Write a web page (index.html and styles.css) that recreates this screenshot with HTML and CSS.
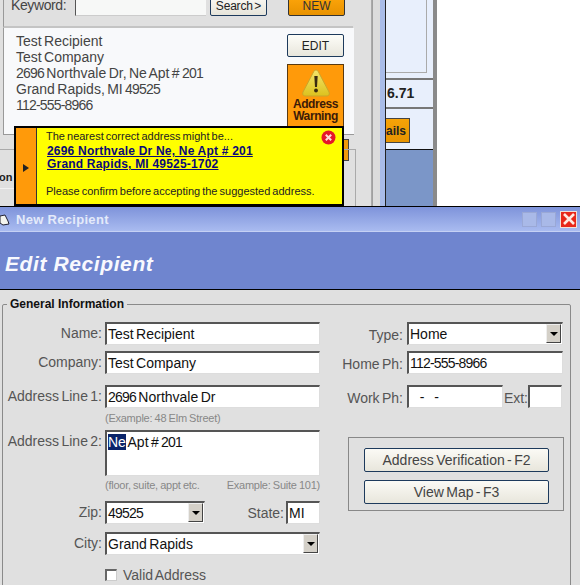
FILE: index.html
```html
<!DOCTYPE html>
<html lang="en">
<head>
    <meta charset="UTF-8" />
    <meta name="viewport" content="width=device-width, initial-scale=1.0" />
    <title>New Recipient</title>
    <link rel="stylesheet" href="styles.css">
</head>
<body>
    <!-- window behind the dialog -->
    <div class="back-window">
        <div class="toolbar">
            <span class="keyword-label">Keyword:</span>
            <span class="keyword-input"></span>
            <button class="btn-small" type="button">Search &gt;</button>
            <button class="btn-new" type="button">NEW</button>
        </div>
        <div class="recipient-card">
            <div class="recipient-text">
                <div>Test Recipient</div>
                <div>Test Company</div>
                <div><span class="num">2696</span> Northvale Dr, Ne Apt # <span class="num">201</span></div>
                <div>Grand Rapids, MI <span class="num">49525</span></div>
                <div class="num">112-555-8966</div>
            </div>
            <div class="recipient-actions">
                <button class="btn-edit" type="button">EDIT</button>
                <div class="warning-box">
                    <svg class="warning-icon" width="30" height="30" viewBox="0 0 30 30">
                        <defs>
                            <linearGradient id="warnFill" x1="0" y1="0" x2="0" y2="1">
                                <stop offset="0" stop-color="#f4e46a" />
                                <stop offset="1" stop-color="#dcc21e" />
                            </linearGradient>
                        </defs>
                        <path d="M15 2 C16.5 2 17 3 18 5 L28 24 C29 27 27.5 28 25 28 L5 28 C2.500 28 1 27 2 24 L12 5 C13 3 13.500 2 15 2 Z" fill="url(#warnFill)" stroke="#c9a52a" />
                        <path d="M13.300 8 H16.700 L16 19 H14 Z" fill="#3a2a10" />
                        <circle cx="15" cy="22.500" r="1.900" fill="#3a2a10" />
                    </svg>
                    <div class="warning-label">Address<br>Warning</div>
                </div>
            </div>
        </div>
        <div class="lower-strip">
            <span class="cut-tab"><span class="cut-label">on</span></span>
            <span class="orange-tab"></span>
            <span class="side-frame"></span>
        </div>
    </div>

    <div class="side-panel">
        <div class="side-column">
            <div class="side-top"><span class="side-inner"></span></div>
            <div class="side-amount">6.71</div>
            <div class="side-action"><button class="btn-details" type="button">ails</button></div>
            <div class="side-fill"></div>
        </div>
    </div>

    <!-- address tooltip -->
    <div class="tooltip">
        <div class="tooltip-strip"><span class="tooltip-arrow"></span></div>
        <div class="tooltip-body">
            <p class="tooltip-line">The nearest correct address might be...</p>
            <a class="tooltip-link" href="#">2696 Northvale Dr Ne, Ne Apt # 201<br>Grand Rapids, MI 49525-1702</a>
            <p class="tooltip-line tooltip-confirm">Please confirm before accepting the suggested address.</p>
        </div>
        <svg class="tooltip-close" width="15" height="15" viewBox="0 0 15 15">
            <circle cx="7.500" cy="7.500" r="7" fill="#e5182a" />
            <path d="M4.800 4.800 L10.200 10.200 M10.200 4.800 L4.800 10.200" stroke="#ffd9d9" stroke-width="2" />
        </svg>
    </div>

    <!-- dialog -->
    <div class="dialog">
        <div class="titlebar">
            <svg class="title-icon" width="10" height="14" viewBox="0 0 10 14">
                <path d="M0 4 L5 3 L8 9 L9 12 L3 13 L0 11 Z" fill="#f4f4ee" stroke="#223" stroke-width="1" />
            </svg>
            <span class="title-text">New Recipient</span>
            <span class="title-btn"></span>
            <span class="title-btn"></span>
            <span class="title-close">
                <svg width="14" height="14" viewBox="0 0 14 14">
                    <path d="M2 2 L12 12 M12 2 L2 12" stroke="#ffe9e0" stroke-width="2.600" />
                </svg>
            </span>
        </div>
        <div class="dialog-header">Edit Recipient</div>
        <div class="dialog-body">
            <fieldset class="group">
                <legend class="group-title">General Information</legend>
                <div class="group-columns">
                    <div class="col-left">
                        <div class="row row-name">
                            <label class="field-label">Name:</label>
                            <div class="field field-full">Test Recipient</div>
                        </div>
                        <div class="row row-company">
                            <label class="field-label">Company:</label>
                            <div class="field field-full">Test Company</div>
                        </div>
                        <div class="row row-line1">
                            <label class="field-label">Address Line 1:</label>
                            <div class="field field-full"><span class="num">2696</span> Northvale Dr</div>
                        </div>
                        <div class="hint-row">(Example: 48 Elm Street)</div>
                        <div class="row row-line2">
                            <label class="field-label">Address Line 2:</label>
                            <div class="field field-area"><span class="selected">Ne</span> Apt # <span class="num">201</span></div>
                        </div>
                        <div class="hint-row hint-split">
                            <span>(floor, suite, appt etc.</span>
                            <span>Example: Suite 101)</span>
                        </div>
                        <div class="row row-zip">
                            <label class="field-label">Zip:</label>
                            <div class="field field-zip"><span class="num">49525</span><span class="drop"></span></div>
                            <label class="state-label">State:</label>
                            <div class="field field-state">MI</div>
                        </div>
                        <div class="row row-city">
                            <label class="field-label">City:</label>
                            <div class="field field-full">Grand Rapids<span class="drop"></span></div>
                        </div>
                        <div class="valid-row">
                            <span class="checkbox"></span>
                            <span>Valid Address</span>
                        </div>
                    </div>
                    <div class="col-right">
                        <div class="row row-type">
                            <label class="right-label">Type:</label>
                            <div class="field field-wide">Home<span class="drop"></span></div>
                        </div>
                        <div class="row row-home">
                            <label class="right-label">Home Ph:</label>
                            <div class="field field-wide"><span class="num">112-555-8966</span></div>
                        </div>
                        <div class="row row-work">
                            <label class="right-label">Work Ph:</label>
                            <div class="field field-work">&nbsp;&nbsp;-&nbsp;&nbsp;-</div>
                            <label class="ext-label">Ext:</label>
                            <div class="field field-ext"></div>
                        </div>
                        <div class="action-box">
                            <button class="btn-action" type="button">Address Verification - F2</button>
                            <button class="btn-action" type="button">View Map - F3</button>
                        </div>
                    </div>
                </div>
            </fieldset>
        </div>
    </div>
</body>
</html>
```

FILE: styles.css
```css
* {
    box-sizing: border-box;
}

html, body {
    margin: 0;
    padding: 0;
}

body {
    position: relative;
    width: 580px;
    height: 585px;
    overflow: hidden;
    background: #fff;
    font-family: "Liberation Sans", Arial, sans-serif;
    font-size: 14px;
    word-spacing: -1.5px;
    color: #444;
}

button {
    font-family: inherit;
    word-spacing: inherit;
    padding: 0;
    cursor: pointer;
}

/* digits of the original font are narrower */
.num {
    letter-spacing: -0.8px;
}

/* back window */
.back-window {
    position: absolute;
    left: 0;
    top: 0;
    width: 372px;
    height: 206px;
    background: #e0e0e0;
    border-right: 1px solid #aaa;
}

.toolbar {
    height: 28px;
    padding: 0 0 10px 11px;
    display: flex;
    align-items: flex-end;
    border-bottom: 2px solid #c4c4c4;
    margin: 0 18px 0 3px;
    border-left: 1px solid #999;
}

.keyword-label {
    font-size: 14px;
    line-height: 14px;
    width: 63px;
    margin-left: -4px;
    margin-right: 1px;
    padding-bottom: 4px;
    letter-spacing: -0.4px;
}

.keyword-input {
    display: block;
    width: 131px;
    height: 20px;
    background: #f7f8f7;
    border-left: 1px solid #555;
    border-bottom: 1px solid #ccc;
}

.btn-small {
    width: 57px;
    height: 20px;
    margin-left: 4px;
    font-size: 12px;
    letter-spacing: -0.2px;
    color: #222;
    background: linear-gradient(#fbfaf5, #e6e4da);
    border: 1px solid #1d3a5c;
    border-radius: 2px;
}

.btn-new {
    width: 57px;
    height: 20px;
    margin-left: 21px;
    font-size: 12px;
    color: #333;
    background: linear-gradient(#fda50a, #e89200);
    border: 1px solid #333;
    border-radius: 2px;
}

.recipient-card {
    display: flex;
    justify-content: space-between;
    height: 107px;
    margin-left: 3px;
    width: 351px;
    padding: 6px 10px 0 12px;
    background: #f8f9fb;
    border-left: 1px solid #999;
    border-bottom: 1px solid #999;
}

.recipient-text {
    line-height: 16px;
    color: #444;
    margin-top: -1px;
}

.recipient-actions {
    width: 57px;
}

.btn-edit {
    display: block;
    width: 57px;
    height: 23px;
    font-size: 12px;
    color: #222;
    background: linear-gradient(#fdfdf8, #e8e6dc);
    border: 1px solid #1d3a5c;
    border-radius: 2px;
}

.warning-box {
    height: 64px;
    margin-top: 7px;
    padding-top: 3px;
    text-align: center;
    background: #ff9a0a;
    border: 1px solid #5a3a10;
}

.warning-icon {
    display: block;
    margin: 0 auto;
}

.warning-label {
    font-size: 12px;
    font-weight: bold;
    line-height: 12px;
    letter-spacing: -0.4px;
    color: #3c1a08;
}

.lower-strip {
    position: relative;
    height: 71px;
}

.cut-tab {
    display: block;
    position: absolute;
    left: 0;
    top: 14px;
    width: 14px;
    height: 40px;
    border-top: 1px solid #aaa;
    border-bottom: 1px solid #f2f2f2;
}

.cut-label {
    position: absolute;
    left: -1px;
    top: 21px;
    font-size: 11px;
    font-weight: bold;
    color: #222;
}

.orange-tab {
    position: absolute;
    left: 340px;
    top: 4px;
    width: 9px;
    height: 22px;
    background: #f09a0a;
    border: 1px solid #444;
}

.side-frame {
    position: absolute;
    left: 340px;
    top: 14px;
    width: 16px;
    height: 60px;
    border-right: 1px solid #aaa;
    border-top: 1px solid #aaa;
}

/* right strip of the back window */
.side-panel {
    position: absolute;
    left: 372px;
    top: 0;
    width: 65px;
    height: 206px;
    padding-left: 13px;
    background: linear-gradient(90deg, #a0a0a0 1px, #dcdcdc 1px, #dcdcdc 8px, #a9bce8 8px);
}

.side-column {
    height: 100%;
    display: flex;
    flex-direction: column;
    background: #a9bce8;
    border-left: 1px solid #222;
    border-right: 4px solid #8a8a8a;
}

.side-top {
    height: 80px;
    flex: none;
    background: #e8effc;
    border-bottom: 2px solid #777;
}

.side-inner {
    display: block;
    width: 41px;
    height: 73px;
    border-right: 1px solid #aaa;
    border-bottom: 1px solid #aaa;
}

.side-amount {
    height: 29px;
    flex: none;
    padding-left: 1px;
    line-height: 27px;
    font-size: 14px;
    font-weight: bold;
    color: #222;
    background: #e8effc;
    border-bottom: 2px solid #777;
}

.side-action {
    height: 41px;
    flex: none;
    padding-top: 9px;
    background: #e8effc;
    border-bottom: 1px solid #111;
}

.btn-details {
    display: block;
    width: 24px;
    height: 25px;
    font-size: 12px;
    font-weight: bold;
    color: #222;
    background: linear-gradient(#f7a308, #e89400);
    border: 1px solid #444;
    border-left: 0;
    text-align: right;
    padding-right: 5px;
}

.side-fill {
    flex: 1;
    background: #7b96c8;
}

/* tooltip */
.tooltip {
    position: absolute;
    left: 14px;
    top: 126px;
    width: 330px;
    height: 80px;
    display: flex;
    background: #ffff00;
    border: 2px solid #000;
    z-index: 2;
}

.tooltip-strip {
    width: 21px;
    display: flex;
    align-items: center;
    justify-content: center;
    background: #ff9a0a;
    border-right: 1px solid #333;
}

.tooltip-arrow {
    width: 0;
    height: 0;
    margin-top: 4px;
    border-top: 4px solid transparent;
    border-bottom: 4px solid transparent;
    border-left: 6px solid #222;
}

.tooltip-body {
    flex: 1;
    padding: 1px 0 0 9px;
    color: #222;
}

.tooltip-line {
    margin: 0;
    font-size: 11px;
    line-height: 14px;
    word-spacing: -1px;
    white-space: nowrap;
}

.tooltip-link {
    display: block;
    margin: 2px 0 0 1px;
    font-size: 12px;
    font-weight: bold;
    line-height: 13px;
    letter-spacing: 0.2px;
    word-spacing: 0;
    color: #0a0a78;
}

.tooltip-confirm {
    margin-top: 13px;
}

.tooltip-close {
    position: absolute;
    right: 6px;
    top: 2px;
}

/* dialog */
.dialog {
    position: absolute;
    left: 0;
    top: 206px;
    width: 580px;
    height: 379px;
    display: flex;
    flex-direction: column;
    background: #e0e0e0;
    border-top: 1px solid #000;
    z-index: 3;
}

.titlebar {
    height: 25px;
    flex: none;
    display: flex;
    align-items: center;
    padding-right: 3px;
    background: linear-gradient(#7e93da, #a9bbf0);
    border-bottom: 1px solid #c5d1f4;
}

.title-text {
    flex: 1;
    margin-left: 6px;
    font-size: 13px;
    font-weight: bold;
    letter-spacing: 0.3px;
    word-spacing: 0;
    color: #e4eafa;
}

.title-btn {
    width: 15px;
    height: 15px;
    margin-right: 4px;
    background: #a9b9e8;
    border: 1px solid #9aa8d6;
}

.title-close {
    width: 17px;
    height: 17px;
    display: flex;
    align-items: center;
    justify-content: center;
    background: #e8281a;
    border: 1px solid #f0e0d8;
}

.dialog-header {
    height: 58px;
    flex: none;
    padding: 3px 0 0 5px;
    line-height: 58px;
    font-size: 21px;
    font-weight: bold;
    font-style: italic;
    letter-spacing: 0.6px;
    word-spacing: 0;
    color: #f8f9fe;
    background: #6f85cf;
    border-bottom: 1px solid #000;
}

.dialog-body {
    flex: 1;
    padding: 0 9px 0 2px;
}

.group {
    margin: 7px 0 0;
    padding: 0;
    height: 300px;
    border: 1px solid #8a8a8a;
    border-radius: 2px;
}

.group-title {
    margin-left: 4px;
    padding: 0 3px;
    font-size: 12px;
    font-weight: bold;
    line-height: 14px;
    word-spacing: 0;
    color: #111;
}

.group-columns {
    display: flex;
}

.col-left {
    width: 318px;
    padding-top: 11px;
}

.col-right {
    margin-left: 19px;
    width: 224px;
    padding-top: 11px;
}

.row {
    display: flex;
    align-items: flex-start;
}

.row-company, .row-home {
    margin-top: 6px;
}

.row-line1, .row-work {
    margin-top: 11px;
}

.row-zip {
    margin-top: 7px;
}

.row-city {
    margin-top: 8px;
}

.field-label {
    width: 99px;
    text-align: right;
    line-height: 23px;
    margin-right: 3px;
    color: #555;
    white-space: nowrap;
    flex: none;
}

.right-label {
    width: 63px;
    height: 23px;
    text-align: right;
    line-height: 26px;
    margin-right: 4px;
    color: #555;
    white-space: nowrap;
    flex: none;
}

.field {
    position: relative;
    height: 23px;
    padding-left: 1px;
    font-size: 14px;
    line-height: 21px;
    color: #111;
    background: #fff;
    border-top: 2px solid #555;
    border-left: 2px solid #555;
    border-right: 1px solid #ddd;
    border-bottom: 1px solid #ddd;
}

.field-full {
    width: 215px;
}

.field-area {
    width: 215px;
    height: 46px;
}

.selected {
    background: #0a246a;
    color: #fff;
}

.hint-row {
    margin: 3px 0 0 102px;
    width: 215px;
    height: 16px;
    font-size: 11px;
    line-height: 14px;
    letter-spacing: -0.25px;
    word-spacing: -0.5px;
    white-space: nowrap;
    color: #888;
}

.hint-split {
    display: flex;
    justify-content: space-between;
    margin-top: 2px;
}

.row-line2 {
    margin-top: 3px;
}

.field-zip {
    width: 100px;
}

.state-label {
    width: 79px;
    height: 23px;
    text-align: right;
    line-height: 25px;
    margin-right: 2px;
    color: #555;
    flex: none;
}

.field-state {
    width: 34px;
}

.drop {
    position: absolute;
    right: 1px;
    top: 0;
    bottom: 1px;
    width: 15px;
    background: #d4d0c8;
    border: 1px solid;
    border-color: #eee #444 #444 #eee;
}

.drop::after {
    content: "";
    position: absolute;
    left: 3px;
    top: 7px;
    border-top: 4px solid #000;
    border-left: 4px solid transparent;
    border-right: 4px solid transparent;
}

.valid-row {
    display: flex;
    align-items: center;
    gap: 6px;
    margin: 12px 0 0 102px;
    color: #555;
}

.checkbox {
    width: 12px;
    height: 12px;
    background: #fff;
    border-top: 2px solid #666;
    border-left: 2px solid #666;
    border-right: 1px solid #ccc;
    border-bottom: 1px solid #ccc;
}

.field-wide {
    width: 156px;
}

.field-work {
    width: 96px;
    word-spacing: 1px;
}

.ext-label {
    width: 25px;
    height: 23px;
    text-align: right;
    line-height: 26px;
    color: #555;
    flex: none;
}

.field-ext {
    width: 34px;
}

.action-box {
    display: flex;
    flex-direction: column;
    align-items: center;
    gap: 8px;
    width: 216px;
    height: 74px;
    margin: 29px 0 0 8px;
    padding: 10px 0 0 1px;
    border: 1px solid #888;
}

.btn-action {
    width: 185px;
    height: 24px;
    flex: none;
    font-size: 14px;
    color: #444;
    background: linear-gradient(#fbfaf5, #e8e6dc);
    border: 1px solid #1d3a5c;
    border-radius: 2px;
}
```
